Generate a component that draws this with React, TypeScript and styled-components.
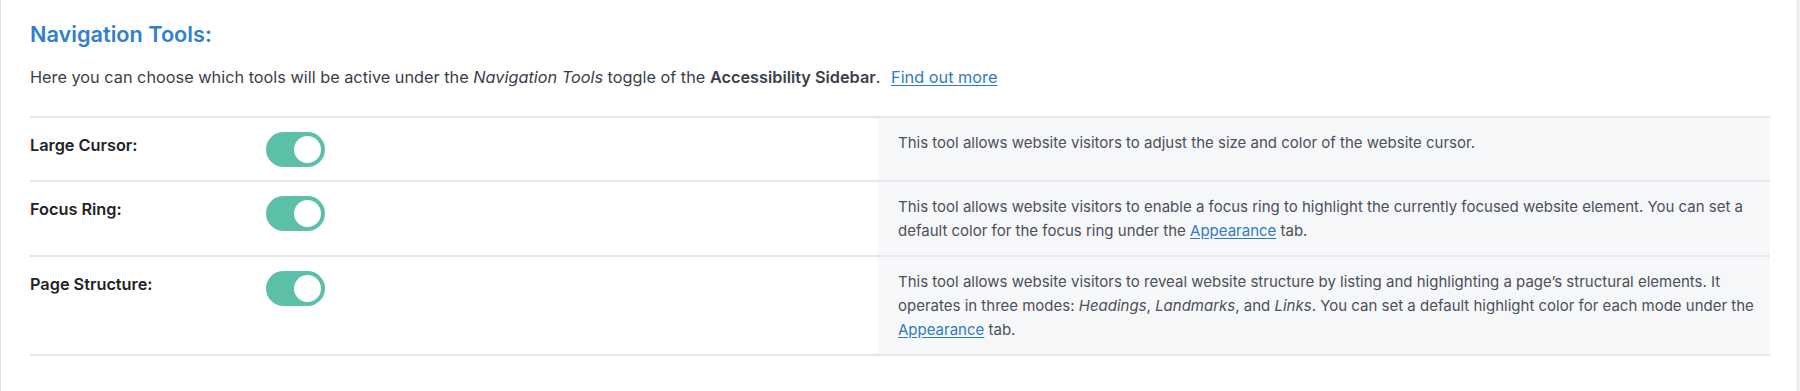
import styled, { createGlobalStyle } from "styled-components";

const GlobalStyle = createGlobalStyle`
  html, body {
    margin: 0;
    padding: 0;
    background: #f0f0f1;
  }
  body {
    font-family: Inter, "Noto Sans", "Liberation Sans", sans-serif;
    -webkit-font-smoothing: antialiased;
  }
`;

const Panel = styled.section`
  width: 1798px;
  height: 391px;
  box-sizing: border-box;
  background: #ffffff;
  border-left: 1px solid #e3e3e5;
  border-right: 1px solid #e3e3e5;
  padding: 19px 27px 0 29px;
`;

const Heading = styled.h2`
  margin: 0;
  font-size: 21.7px;
  line-height: 30px;
  font-weight: 600;
  color: #2f80cd;
`;

const Intro = styled.p`
  margin: 16px 0 0;
  font-size: 16.3px;
  line-height: 24px;
  color: #3a404b;

  strong {
    font-weight: 600;
    color: #3a404b;
  }
`;

const Link = styled.a`
  color: #2f7bc4;
  text-decoration: underline;
  text-underline-offset: 2px;
  margin-left: 6px;
`;

const Table = styled.div`
  margin-top: 27px;
  border-top: 2px solid #e6e7eb;
`;

const Row = styled.div`
  display: grid;
  grid-template-columns: 236px 612px 1fr;
  border-bottom: 2px solid #e6e7eb;
`;

const Label = styled.div`
  padding: 17px 0 0;
  font-size: 16.3px;
  line-height: 20px;
  font-weight: 600;
  color: #1d2327;
`;

const ToggleCell = styled.div`
  padding: 14px 0 13px;
`;

const Toggle = styled.span<{ on: boolean }>`
  display: flex;
  justify-content: ${(p) => (p.on ? "flex-end" : "flex-start")};
  align-items: center;
  width: 59px;
  height: 35px;
  box-sizing: border-box;
  padding: 0 4px;
  border-radius: 18px;
  background: ${(p) => (p.on ? "#5cc0a8" : "#c3c4c7")};

  &::after {
    content: "";
    width: 27px;
    height: 27px;
    border-radius: 50%;
    background: #ffffff;
  }
`;

const Desc = styled.div`
  background: #f6f7f9;
  padding: 13px 10px 12px 20px;
  font-size: 15px;
  line-height: 24px;
  color: #4b5059;

  a {
    color: #2f7bc4;
    text-decoration: underline;
    text-underline-offset: 2px;
  }
`;

const tools = [
  {
    label: "Large Cursor:",
    desc: <>This tool allows website visitors to adjust the size and color of the website cursor.</>,
  },
  {
    label: "Focus Ring:",
    desc: (
      <>
        This tool allows website visitors to enable a focus ring to highlight the currently focused website element. You
        can set a default color for the focus ring under the <a href="#">Appearance</a> tab.
      </>
    ),
  },
  {
    label: "Page Structure:",
    desc: (
      <>
        This tool allows website visitors to reveal website structure by listing and highlighting a page’s structural
        elements. It operates in three modes: <em>Headings</em>, <em>Landmarks</em>, and <em>Links</em>. You can set a
        default highlight color for each mode under the <a href="#">Appearance</a> tab.
      </>
    ),
  },
];

export default function App() {
  return (
    <>
      <GlobalStyle />
      <Panel>
        <Heading>Navigation Tools:</Heading>
        <Intro>
          Here you can choose which tools will be active under the <em>Navigation Tools</em> toggle of the{" "}
          <strong>Accessibility Sidebar</strong>. <Link href="#">Find out more</Link>
        </Intro>
        <Table>
          {tools.map((t) => (
            <Row key={t.label}>
              <Label>{t.label}</Label>
              <ToggleCell>
                <Toggle on={true} />
              </ToggleCell>
              <Desc>{t.desc}</Desc>
            </Row>
          ))}
        </Table>
      </Panel>
    </>
  );
}
